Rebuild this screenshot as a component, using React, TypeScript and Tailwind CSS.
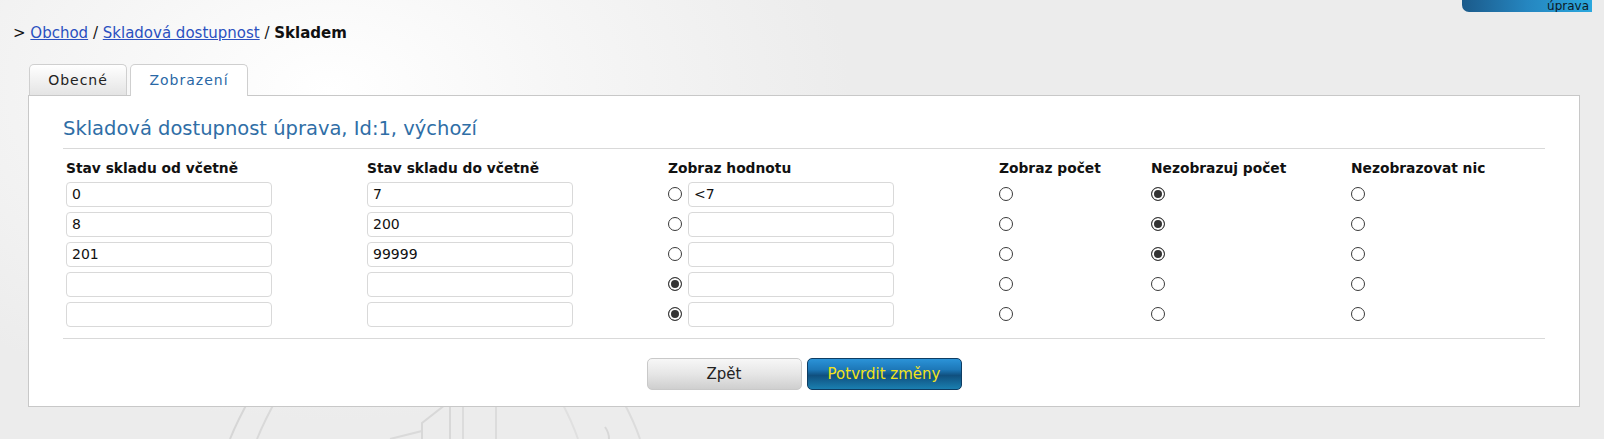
import React from "react";

// ---------------------------------------------------------------------------
// Data
// ---------------------------------------------------------------------------

type Choice = "value" | "count" | "nocount" | "nothing";

interface Row {
  from: string;
  to: string;
  value: string;
  choice: Choice;
}

const ROWS: Row[] = [
  { from: "0", to: "7", value: "<7", choice: "nocount" },
  { from: "8", to: "200", value: "", choice: "nocount" },
  { from: "201", to: "99999", value: "", choice: "nocount" },
  { from: "", to: "", value: "", choice: "value" },
  { from: "", to: "", value: "", choice: "value" },
];

const HEADERS = [
  "Stav skladu od včetně",
  "Stav skladu do včetně",
  "Zobraz hodnotu",
  "Zobraz počet",
  "Nezobrazuj počet",
  "Nezobrazovat nic",
];

// ---------------------------------------------------------------------------
// Bits
// ---------------------------------------------------------------------------

function Radio({ name, checked }: { name: string; checked: boolean }) {
  return (
    <input
      type="radio"
      name={name}
      defaultChecked={checked}
      className="appearance-none m-0 w-[14px] h-[14px] shrink-0 rounded-full border border-[#3a3a3a] bg-white checked:bg-[#333] checked:shadow-[inset_0_0_0_2px_#fff]"
    />
  );
}

function TextBox({ value }: { value: string }) {
  return (
    <input
      type="text"
      defaultValue={value}
      className="w-[206px] h-[25px] px-[5px] rounded-[4px] border border-[#d9d9d9] bg-white text-[14px] text-[#111] outline-none"
    />
  );
}

function Watermark() {
  return (
    <svg
      className="absolute left-0 bottom-0 pointer-events-none"
      width="900"
      height="120"
      viewBox="0 0 900 120"
      fill="none"
    >
      <path d="M230 120 C 238 100, 245 88, 255 70" stroke="#d6d6d6" strokeWidth="2" />
      <path d="M257 120 C 265 100, 272 88, 282 70" stroke="#d9d9d9" strokeWidth="2" />
      <path d="M390 120 L 410 115 L 422 112" stroke="#dadada" strokeWidth="2" />
      <path d="M422 120 L 422 104 L 450 82 L 450 120" stroke="#d8d8d8" strokeWidth="2" />
      <path d="M463 120 L 463 80" stroke="#dcdcdc" strokeWidth="2" />
      <path d="M496 120 L 496 80" stroke="#dcdcdc" strokeWidth="2" />
      <path d="M560 80 C 568 95, 574 108, 578 120" stroke="#e0e0e0" strokeWidth="2" />
      <path d="M622 80 C 630 95, 636 108, 640 120" stroke="#dcdcdc" strokeWidth="2" />
      <path d="M605 108 C 608 112, 609 116, 609 120" stroke="#d8d8d8" strokeWidth="2" />
    </svg>
  );
}

// ---------------------------------------------------------------------------
// Page
// ---------------------------------------------------------------------------

export default function App() {
  return (
    <main
      className="relative min-h-[439px] overflow-hidden bg-[#ececec] bg-[radial-gradient(ellipse_520px_330px_at_330px_90px,#ffffff_0%,#f6f6f6_45%,#ececec_100%)] text-[#111]"
      style={{ fontFamily: "'DejaVu Sans', Verdana, sans-serif" }}
    >
      <Watermark />

      {/* top right tab */}
      <div className="absolute top-0 right-[12px] w-[130px] h-[12px] overflow-hidden rounded-bl-[7px] bg-gradient-to-r from-[#1b5a8a] via-[#2586c0] to-[#2ba8de] flex items-start justify-end pr-[3px]">
        <span className="-mt-[1px] text-[12px] leading-[14px] text-[#0d1a26]">úprava</span>
      </div>

      <div className="relative">
        {/* Breadcrumb */}
        <nav className="pl-[13px] pt-[24px] text-[15px] leading-[18px]">
          &gt;{" "}
          <a href="#" className="text-[#2a50c0] underline">
            Obchod
          </a>{" "}
          /{" "}
          <a href="#" className="text-[#2a50c0] underline">
            Skladová dostupnost
          </a>{" "}
          / <span className="font-bold">Skladem</span>
        </nav>

        {/* Tabs */}
        <div className="flex items-end gap-[3px] pl-[29px] mt-[22px]">
          <div className="w-[98px] h-[31px] flex items-center justify-center rounded-t-[5px] border border-b-0 border-[#cfcfcf] bg-gradient-to-b from-[#ffffff] to-[#e4e4e4] text-[14px] tracking-[1px] text-[#222]">
            Obecné
          </div>
          <div className="relative z-10 -mb-px w-[118px] h-[32px] flex items-center justify-center rounded-t-[5px] border border-b-0 border-[#cfcfcf] bg-white text-[14px] tracking-[1px] text-[#2a68a6]">
            Zobrazení
          </div>
        </div>

        {/* Panel */}
        <section className="ml-[28px] mr-[24px] border border-[#c8c8c8] bg-white px-[34px] pb-[16px]">
          <h1 className="pt-[21px] pb-[7px] text-[19.5px] leading-[24px] text-[#2f6ea6] border-b border-[#d9d9d9]">
            Skladová dostupnost úprava, Id:1, výchozí
          </h1>

          <div className="grid grid-cols-[301px_301px_331px_152px_200px_1fr] pt-[11px] pb-[9px] border-b border-[#d9d9d9]">
            {HEADERS.map((h) => (
              <div key={h} className="pl-[3px] h-[19px] text-[13.8px] leading-[17px] font-bold text-[#111]">
                {h}
              </div>
            ))}

            {ROWS.map((r, i) => (
              <React.Fragment key={i}>
                <div className="pl-[3px] h-[30px] flex items-center">
                  <TextBox value={r.from} />
                </div>
                <div className="pl-[3px] h-[30px] flex items-center">
                  <TextBox value={r.to} />
                </div>
                <div className="pl-[3px] h-[30px] flex items-center gap-[6px]">
                  <Radio name={`row-${i}`} checked={r.choice === "value"} />
                  <TextBox value={r.value} />
                </div>
                <div className="pl-[3px] h-[30px] flex items-center">
                  <Radio name={`row-${i}`} checked={r.choice === "count"} />
                </div>
                <div className="pl-[3px] h-[30px] flex items-center">
                  <Radio name={`row-${i}`} checked={r.choice === "nocount"} />
                </div>
                <div className="pl-[3px] h-[30px] flex items-center">
                  <Radio name={`row-${i}`} checked={r.choice === "nothing"} />
                </div>
              </React.Fragment>
            ))}
          </div>

          <div className="flex justify-center gap-[5px] pt-[19px]">
            <button className="w-[155px] h-[32px] rounded-[5px] border border-[#c9c9c9] bg-gradient-to-b from-[#f7f7f7] via-[#e6e6e6] to-[#cfcfcf] text-[15px] text-[#222]">
              Zpět
            </button>
            <button className="w-[155px] h-[32px] rounded-[5px] border border-[#0e3d63] bg-[linear-gradient(to_bottom,#2b93d8_0%,#1d78b8_35%,#10507f_55%,#1a7fb0_100%)] text-[15px] text-[#f2e31b]">
              Potvrdit změny
            </button>
          </div>
        </section>
      </div>
    </main>
  );
}
